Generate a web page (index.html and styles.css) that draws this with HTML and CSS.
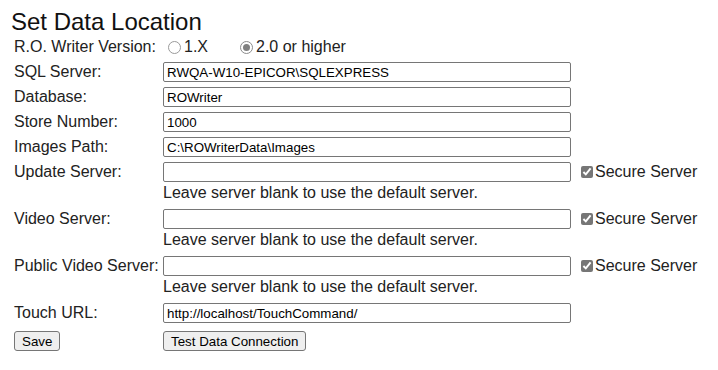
FILE: index.html
```html
<!DOCTYPE html>
<html>
<head>
<meta charset="utf-8">
<title>Set Data Location</title>
<link rel="stylesheet" href="styles.css">
</head>
<body>
<h1 class="title">Set Data Location</h1>
<form class="form">
  <div class="label">R.O. Writer Version:</div>
  <div class="field radios">
    <input type="radio" name="ver" class="radio" disabled><span class="rtext">1.X</span>
    <span class="spacer"></span>
    <input type="radio" name="ver" class="radio" checked disabled><span class="rtext">2.0 or higher</span>
  </div>
  <div></div>

  <div class="label">SQL Server:</div>
  <input class="text" type="text" value="RWQA-W10-EPICOR\SQLEXPRESS">
  <div></div>

  <div class="label">Database:</div>
  <input class="text" type="text" value="ROWriter">
  <div></div>

  <div class="label">Store Number:</div>
  <input class="text" type="text" value="1000">
  <div></div>

  <div class="label">Images Path:</div>
  <input class="text" type="text" value="C:\ROWriterData\Images">
  <div></div>

  <div class="label">Update Server:</div>
  <input class="text" type="text" value="">
  <label class="secure"><input type="checkbox" class="check" checked>Secure Server</label>
  <div></div>
  <div class="hint">Leave server blank to use the default server.</div>
  <div></div>

  <div class="label">Video Server:</div>
  <input class="text" type="text" value="">
  <label class="secure"><input type="checkbox" class="check" checked>Secure Server</label>
  <div></div>
  <div class="hint">Leave server blank to use the default server.</div>
  <div></div>

  <div class="label">Public Video Server:</div>
  <input class="text" type="text" value="">
  <label class="secure"><input type="checkbox" class="check" checked>Secure Server</label>
  <div></div>
  <div class="hint">Leave server blank to use the default server.</div>
  <div></div>

  <div class="label">Touch URL:</div>
  <input class="text" type="text" value="http://localhost/TouchCommand/">
  <div></div>

  <div class="btncell"><button type="button" class="btn">Save</button></div>
  <div class="btncell"><button type="button" class="btn">Test Data Connection</button></div>
  <div></div>
</form>
</body>
</html>
```

FILE: styles.css
```css
html, body {
  background: #ffffff;
}
body {
  margin: 8px;
  font-family: "Liberation Sans", Arial, sans-serif;
  color: #222222;
}
.title {
  margin: 0 0 1px 0;
  padding-left: 3px;
  font-size: 24px;
  line-height: 28px;
  font-weight: normal;
  color: #111111;
}
.form {
  display: grid;
  grid-template-columns: 149px 408px auto;
  grid-auto-rows: auto;
  row-gap: 5px;
  margin-left: 6px;
  font-size: 16px;
}
.label {
  height: 20px;
  line-height: 20px;
  white-space: nowrap;
  display: flex;
  align-items: center;
}
.field {
  height: 20px;
  display: flex;
  align-items: center;
}
.radio {
  appearance: none;
  -webkit-appearance: none;
  box-sizing: border-box;
  width: 13px;
  height: 13px;
  margin: 0 3px 0 5px;
  border: 1px solid #9a9a9a;
  border-radius: 50%;
  background: #ffffff;
  position: relative;
}
.radio:checked {
  border-color: #8c8c8c;
}
.radio:checked::after {
  content: "";
  position: absolute;
  left: 2px;
  top: 2px;
  width: 7px;
  height: 7px;
  border-radius: 50%;
  background: #808080;
}
.rtext {
  white-space: nowrap;
}
.spacer {
  width: 27px;
}
.text {
  box-sizing: border-box;
  width: 408px;
  height: 20px;
  margin: 0;
  padding: 0 3px;
  border: 1px solid #767676;
  border-radius: 2px;
  font-family: "Liberation Sans", Arial, sans-serif;
  font-size: 13.33px;
  color: #000000;
  background: #ffffff;
}
.secure {
  display: flex;
  align-items: center;
  padding-left: 6px;
  white-space: nowrap;
  height: 20px;
}
.check {
  width: 12px;
  height: 12px;
  margin: 0 2px 0 4px;
  accent-color: #767676;
}
.hint {
  margin-top: -3px;
  line-height: 18px;
  padding-bottom: 2px;
  white-space: nowrap;
}
.btncell {
  margin-top: 3px;
  display: flex;
  align-items: flex-start;
}
.btn {
  box-sizing: border-box;
  height: 20px;
  margin: 0;
  padding: 0 7px;
  border: 1px solid #767676;
  border-radius: 3px;
  background: #efefef;
  font-family: "Liberation Sans", Arial, sans-serif;
  font-size: 13.33px;
  color: #000000;
}
```
